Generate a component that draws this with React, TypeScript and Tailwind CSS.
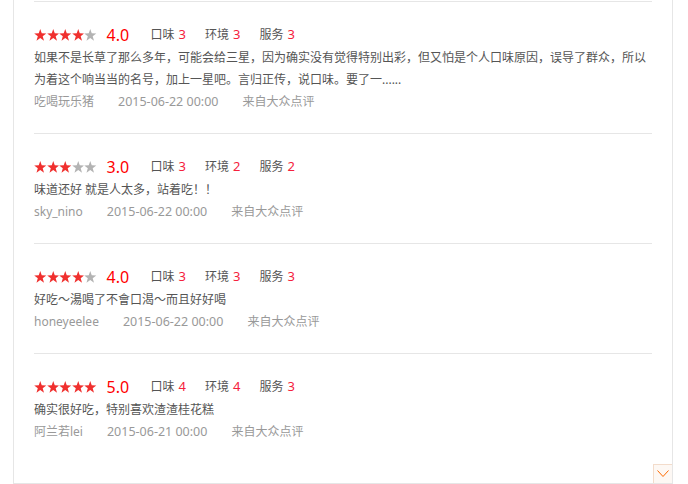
import React from "react";

type Review = {
  stars: number;
  taste: number;
  env: number;
  service: number;
  text: string;
  user: string;
  time: string;
};

const reviews: Review[] = [
  {
    stars: 4,
    taste: 3,
    env: 3,
    service: 3,
    text: "如果不是长草了那么多年，可能会给三星，因为确实没有觉得特别出彩，但又怕是个人口味原因，误导了群众，所以为着这个响当当的名号，加上一星吧。言归正传，说口味。要了一......",
    user: "吃喝玩乐猪",
    time: "2015-06-22 00:00",
  },
  {
    stars: 3,
    taste: 3,
    env: 2,
    service: 2,
    text: "味道还好 就是人太多，站着吃！！",
    user: "sky_nino",
    time: "2015-06-22 00:00",
  },
  {
    stars: 4,
    taste: 3,
    env: 3,
    service: 3,
    text: "好吃～湯喝了不會口渴～而且好好喝",
    user: "honeyeelee",
    time: "2015-06-22 00:00",
  },
  {
    stars: 5,
    taste: 4,
    env: 4,
    service: 3,
    text: "确实很好吃，特别喜欢渣渣桂花糕",
    user: "阿兰若lei",
    time: "2015-06-21 00:00",
  },
];

function Star({ on }: { on: boolean }) {
  return (
    <svg width="12.5" height="12" viewBox="0 0 24 23">
      <polygon
        points="12,0 14.9,8.2 23.6,8.4 16.7,13.7 19.2,22.5 12,17.4 4.8,22.5 7.3,13.7 0.4,8.4 9.1,8.2"
        fill={on ? "#f0302e" : "#b3b3b3"}
      />
    </svg>
  );
}

function Score({ label, value }: { label: string; value: number }) {
  return (
    <span className="mr-[19px] flex items-baseline">
      <span className="text-[12px] text-[#555]">{label}</span>
      <span className="ml-[4px] text-[13px] text-[#f5213c]">{value}</span>
    </span>
  );
}

function ReviewItem({ r }: { r: Review }) {
  return (
    <li className="border-t border-[#e6e6e6] pt-[20px] pb-[20px]">
      <div className="flex h-[25px] items-center">
        <div className="flex items-center">
          {[0, 1, 2, 3, 4].map((i) => (
            <Star key={i} on={i < r.stars} />
          ))}
        </div>
        <span className="ml-[10px] w-[44px] text-[16px] leading-none text-[#f00]">
          {r.stars.toFixed(1)}
        </span>
        <Score label="口味" value={r.taste} />
        <Score label="环境" value={r.env} />
        <Score label="服务" value={r.service} />
      </div>
      <p className="text-[12px] leading-[22px] text-[#555]">{r.text}</p>
      <div className="flex text-[12px] leading-[22px] text-[#999]">
        <span>{r.user}</span>
        <span className="ml-[24px] text-[12.5px]">{r.time}</span>
        <span className="ml-[24px]">来自大众点评</span>
      </div>
    </li>
  );
}

export default function App() {
  return (
    <div
      className="h-[484px] w-[688px] bg-white"
      style={{ fontFamily: '"Noto Sans", "Noto Sans CJK SC", sans-serif' }}
    >
      <div className="relative ml-[13px] h-[484px] w-[660px] border-x border-b border-[#e6e6e6] px-[20px] pt-px">
        <ul>
          {reviews.map((r, i) => (
            <ReviewItem key={i} r={r} />
          ))}
        </ul>
        <button className="absolute right-0 bottom-0 flex h-[19px] w-[19px] items-center justify-center border-t border-l border-[#f3dccb] bg-[#fdf8f4]">
          <svg width="12" height="8" viewBox="0 0 12 8">
            <polyline points="0.5,0.5 6,6.5 11.5,0.5" fill="none" stroke="#ff6a00" strokeWidth="1" />
          </svg>
        </button>
      </div>
    </div>
  );
}
